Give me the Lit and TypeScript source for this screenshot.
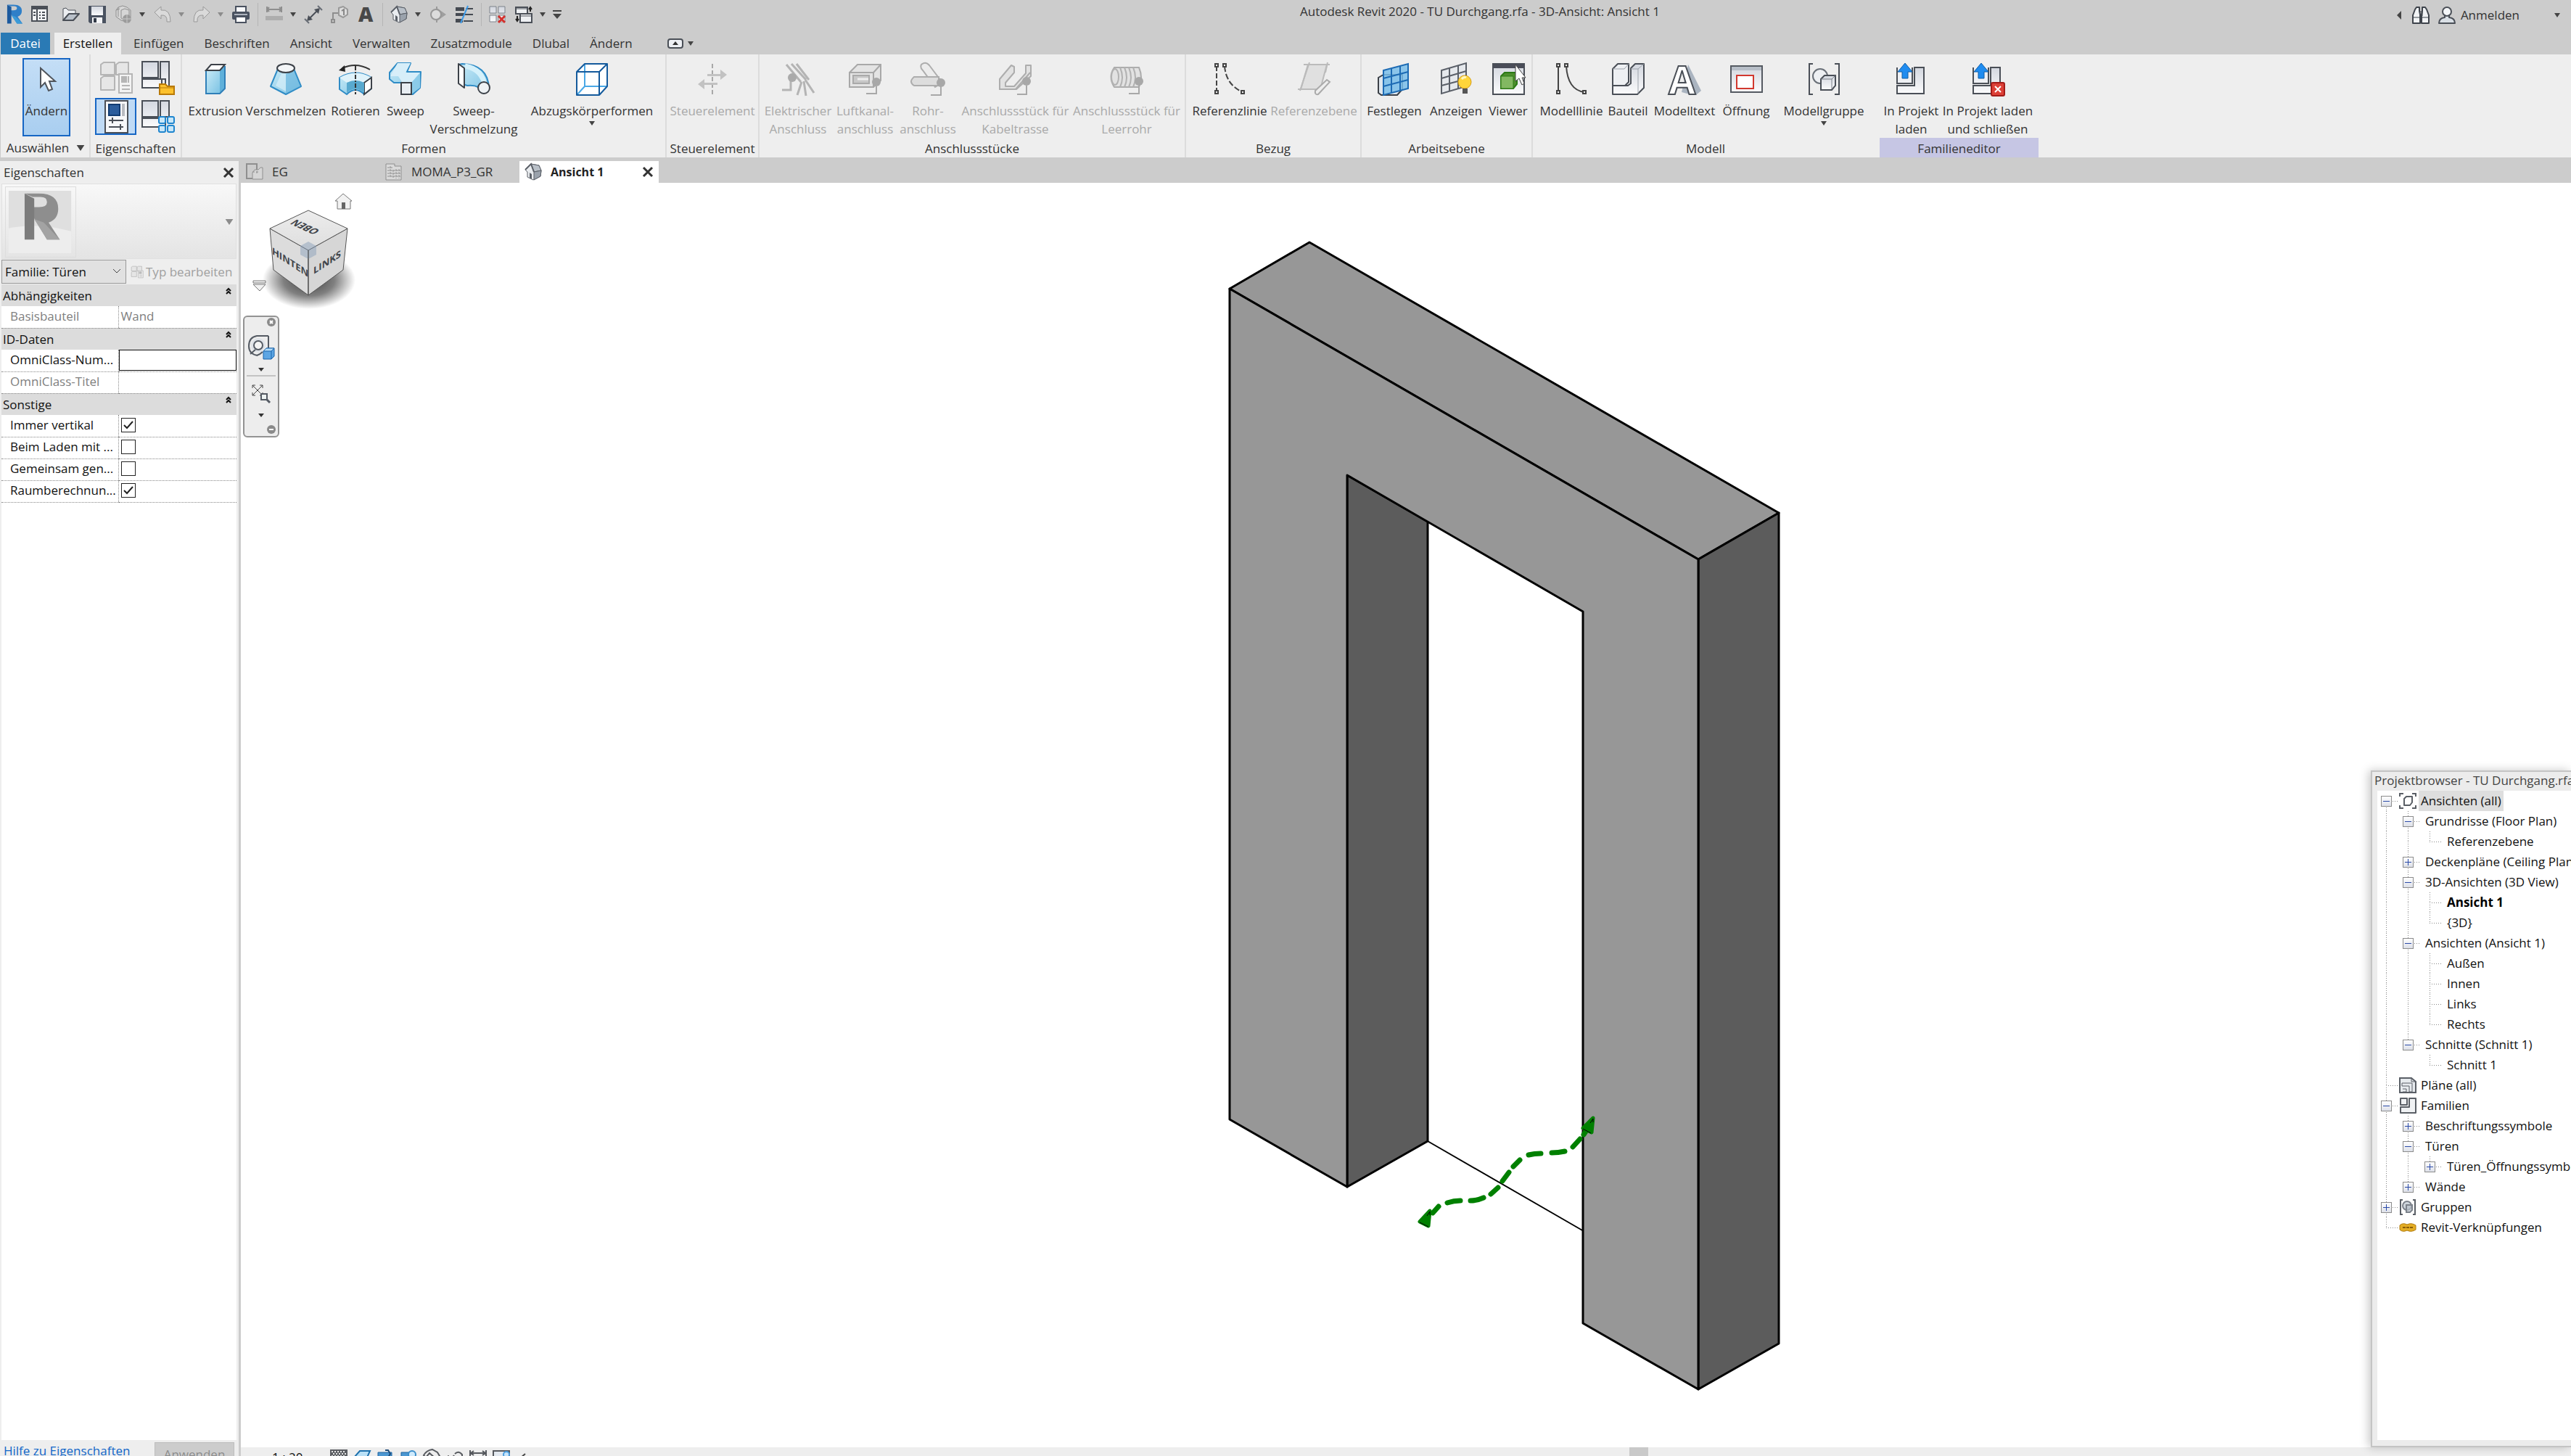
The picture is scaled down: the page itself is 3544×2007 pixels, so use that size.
import { LitElement, html, svg, css, nothing, type TemplateResult } from "lit";
import { customElement, state } from "lit/decorators.js";
import { classMap } from "lit/directives/class-map.js";
import { styleMap } from "lit/directives/style-map.js";

type Art = TemplateResult<2>;

/** 48-unit drawings used by the large ribbon commands. */
const ribbonArt: Record<string, Art> = {
  extrusion: svg`<path d="M11 12h19v32H11z" fill="url(#cyan)"/><path d="M30 12l7-7v32l-7 7z" fill="#5fb0da"/><path d="M11 12l7-8h19l-7 8z" fill="#fff" stroke="#3c4148" stroke-width="2"/><path d="M11 13v31h19l7-7V6" fill="none" stroke="#2f7fb8" stroke-width="2"/>`,
  blend: svg`<path d="M13 10L3 34l21 11 21-11L35 10z" fill="url(#cyan)" stroke="#2f8cc6" stroke-width="2" stroke-linejoin="round"/><path d="M24 17v27l20-10-9-22z" fill="#6db7de" opacity=".65"/><path d="M18 16L10 33l14 8V17z" fill="#d9f0fa" opacity=".7"/><ellipse cx="24" cy="9" rx="12" ry="6" fill="#f4f6f8" stroke="#3c4148" stroke-width="2"/>`,
  revolve: svg`<path d="M2 22q22-13 44 0v15l-10 8q-12-12-24 0L2 38z" fill="url(#cyan)" stroke="#2f8cc6" stroke-width="2"/><path d="M2 22q22-13 44 0l-10 7q-12-6-24 0z" fill="#dff2fa"/><path d="M36 29l10-7v15l-10 8z" fill="#fff" stroke="#3c4148" stroke-width="2"/><path d="M12 29q12-6 24 0v14q-12-11-24 0z" fill="#58a9cf"/><path d="M24 6v39" stroke="#333" stroke-width="2" stroke-dasharray="6 2 2 2"/><path d="M6 9q19-9 38 2" fill="none" stroke="#333" stroke-width="2"/><path d="M1 12l8-7 1 9z" fill="#222"/>`,
  sweep: svg`<path d="M13 2h18l-5 12h19l-1 22-10 9H19V29H8L2 24v-9z" fill="url(#cyan)" stroke="#2f8cc6" stroke-width="2" stroke-linejoin="round"/><path d="M13 2h18l-7 13h20L33 28H19L14 20H3z" fill="#d7eef9"/><path d="M33 28l11-12v20l-11 8z" fill="#8bcbe8"/><path d="M18 29h14v16H18z" fill="#e8edf2" stroke="#3c4148" stroke-width="2"/>`,
  sweptBlend: svg`<path d="M8 3q36 1 37 34l-8 6q-5-12-22-10L3 29V4z" fill="url(#cyan)" stroke="#2f8cc6" stroke-width="2"/><path d="M12 6q24 4 28 29" fill="none" stroke="#d5f1fb" stroke-width="7"/><path d="M3 3l8 6v27l-8-6z" fill="#fff" stroke="#3c4148" stroke-width="2" stroke-linejoin="round"/><circle cx="38" cy="36" r="8" fill="#eef2f5" stroke="#3c4148" stroke-width="2"/>`,
  voidForm: svg`<path d="M3 14L14 3h31v32L34 46H3z" fill="#fff"/><path d="M14 3v31L3 46M14 34h31" fill="none" stroke="#4aa8e6" stroke-width="2"/><path d="M3 14h31v32H3zL14 3h31L34 14M45 3v31L34 46" fill="none" stroke="#145a9c" stroke-width="2" stroke-linejoin="round"/>`,
  control: svg`<path d="M24 3v43" stroke="#a8a8a8" stroke-width="2" stroke-dasharray="6 3"/><path d="M17 17h18v-6l9 7-9 7v-5H17zM31 29H13v-5l-9 7 9 7v-6h18z" fill="#c2c2c2"/>`,
  elec: svg`<g fill="none" stroke="#b4b4b4" stroke-width="3"><path d="M8 4l20 24M15 3l20 22M22 3l17 22M29 28l-6 18M32 27l3 20M34 25l12 18M14 27v12H2"/></g><circle cx="16" cy="22" r="6" fill="#aaa"/>`,
  duct: svg`<path d="M2 15L13 4h32v22L35 35H2z" fill="#e4e4e4" stroke="#a8a8a8" stroke-width="2"/><path d="M2 15h33v20H2zM35 15L45 4" fill="none" stroke="#a8a8a8" stroke-width="2"/><path d="M7 19h22v11H7z" fill="#c8c8c8" stroke="#aaa" stroke-width="2"/><path d="M13 24h15" stroke="#eee" stroke-width="3"/><circle cx="39" cy="28" r="6" fill="#a8a8a8"/><path d="M39 34v10H25" fill="none" stroke="#a8a8a8" stroke-width="2"/>`,
  pipe: svg`<path d="M15 4q6-5 11 1l18 24-10 6L17 12q-4-4-2-8z" fill="#ececec" stroke="#adadad" stroke-width="2"/><path d="M5 21h34v12H5q-8-5 0-12z" fill="#ddd" stroke="#adadad" stroke-width="2"/><circle cx="42" cy="29" r="6" fill="#a8a8a8"/><path d="M42 34v12H28" fill="none" stroke="#a8a8a8" stroke-width="2"/>`,
  tray: svg`<path d="M2 24L18 5l4 2v8L10 29v5h12l16-18V5h7v15L25 38H2z" fill="#e2e2e2" stroke="#adadad" stroke-width="2" stroke-linejoin="round"/><path d="M2 24v14h22l20-23" fill="none" stroke="#adadad" stroke-width="2"/><circle cx="39" cy="27" r="6" fill="#a8a8a8"/><path d="M39 33v12H26" fill="none" stroke="#a8a8a8" stroke-width="2"/>`,
  conduit: svg`<path d="M7 8h34q6 14 0 27H7Q-2 21 7 8z" fill="#e2e2e2" stroke="#adadad" stroke-width="2"/><g fill="none" stroke="#b2b2b2" stroke-width="2"><path d="M15 8q6 14 0 27M21 8q6 14 0 27M27 8q6 14 0 27M33 8q6 14 0 27"/><ellipse cx="8" cy="21" rx="5" ry="11"/></g><circle cx="41" cy="27" r="6" fill="#a8a8a8"/><path d="M41 33v11H27" fill="none" stroke="#a8a8a8" stroke-width="2"/>`,
  refLine: svg`<path d="M6 6v34" stroke="#444" stroke-width="2" stroke-dasharray="7 3"/><path d="M17 6q2 26 25 36" fill="none" stroke="#444" stroke-width="2" stroke-dasharray="8 3"/><g fill="#eee" stroke="#444" stroke-width="2"><path d="M4 3h4v4H4zM15 3h4v4h-4zM4 40h4v4H4zM40 40h4v4h-4z"/></g>`,
  refPlane: svg`<path d="M16 4h26l-9 34H6z" fill="#e0e0e0" stroke="#bbb" stroke-width="2"/><path d="M10 4h36M18 1L5 40M43 1l-3 14M2 38h26" stroke="#bbb" stroke-width="2"/><path d="M26 40l16-15 4 3-16 17q-5 1-4-5z" fill="#eee" stroke="#aaa" stroke-width="2"/>`,
  setPlane: svg`<path d="M2 22l7-4h26v20l-7 8H6l-4-3z" fill="#dfe7ee" stroke="#3c4148" stroke-width="2"/><path d="M9 12l34-9v34L9 46z" fill="#79bde9" fill-opacity=".85" stroke="#1d6bb4" stroke-width="2"/><path d="M20 9v34M32 6v34M9 23l34-9M9 34l34-9" stroke="#1d6bb4" stroke-width="2"/>`,
  showPlane: svg`<path d="M4 12l34-10v32L4 44z" fill="#e5e8ec" stroke="#5a5f68" stroke-width="2"/><path d="M15 9v32M27 6v32M4 23l34-10M4 33l34-9" stroke="#5a5f68" stroke-width="2"/><circle cx="36" cy="28" r="9" fill="#ffd53a" stroke="#d59b12"/><path d="M32 24q3-4 6-2" stroke="#fff6c0" stroke-width="3" fill="none"/><path d="M33 37h7v7h-7z" fill="#555"/>`,
  viewer: svg`<path d="M3 3h43v42H3z" fill="url(#steel)" stroke="#4a4f57" stroke-width="2"/><path d="M3 3h43v6H3z" fill="#4a4d58"/><path d="M14 20l5-5h17v16l-5 6H14z" fill="#4d8f2d" stroke="#2c7a17" stroke-width="2"/><path d="M14 20h17v17H14z" fill="#82b862" stroke="#2c7a17" stroke-width="1"/><path d="M34 4v23l5-4 4 9 3-2-3-8h5z" fill="#fff" stroke="#444"/>`,
  modelLine: svg`<path d="M6 6v34M17 6q2 33 25 36" fill="none" stroke="#444" stroke-width="2"/><g fill="#eee" stroke="#444" stroke-width="2"><path d="M4 3h4v4H4zM15 3h4v4h-4zM4 40h4v4H4zM40 40h4v4h-4z"/></g>`,
  component: svg`<path d="M3 10l7-7h15v25l-5 5H3z" fill="#eef0f3" stroke="#4a4f57" stroke-width="2" stroke-linejoin="round"/><path d="M28 9l6-6h12v33l-9 9H3V33h21l4-3z" fill="url(#steel)" stroke="#4a4f57" stroke-width="2" stroke-linejoin="round"/><path d="M3 10h16l6-7M28 10h10l8-7M38 10v34" fill="none" stroke="#9da3ab"/>`,
  modelText: svg`<path d="M20 42L29 4l18 36-6 5H31z" fill="#aab4c0"/><text x="2" y="45" class="glyph54" fill="#fff" stroke="#4a4f57" stroke-width="2">A</text>`,
  opening: svg`<path d="M3 6h43v36H3z" fill="url(#steel)" stroke="#555a62" stroke-width="2"/><path d="M4 7h41v5H4z" fill="#b8bfc8"/><path d="M11 19h23v18H11z" fill="#fff" stroke="#d2382f" stroke-width="2"/>`,
  modelGroup: svg`<path d="M9 3H4v42h5M39 3h6v42h-6" fill="none" stroke="#4a4f57" stroke-width="2"/><circle cx="19" cy="20" r="10" fill="#eef0f3" stroke="#6a7078" stroke-width="2"/><path d="M20 24l5-5h15v14l-5 6H20z" fill="url(#steel)" stroke="#4a4f57" stroke-width="2"/><path d="M20 24h15v14M35 24l5-5" fill="none" stroke="#7a8088"/>`,
  load: svg`<path d="M4 8h22v22H4z" fill="#eef0f4"/><path d="M4 8v22h21V8" fill="none" stroke="#4a4f57" stroke-width="2"/><path d="M28 8h13v36H4V33h24z" fill="url(#steel)" stroke="#4a4f57" stroke-width="2"/><path d="M15 2l10 12h-6v9h-8v-9H5z" fill="#1f8cf0" stroke="#0f5ea8"/>`,
  loadClose: svg`<path d="M4 8h22v22H4z" fill="#eef0f4"/><path d="M4 8v22h21V8" fill="none" stroke="#4a4f57" stroke-width="2"/><path d="M28 8h13v36H4V33h24z" fill="url(#steel)" stroke="#4a4f57" stroke-width="2"/><path d="M15 2l10 12h-6v9h-8v-9H5z" fill="#1f8cf0" stroke="#0f5ea8"/><rect x="29" y="29" width="18" height="18" rx="2" fill="#dd4037" stroke="#a31b18" stroke-width="2"/><path d="M34 34l8 8m0-8l-8 8" stroke="#fff" stroke-width="2"/>`,
  cursor: svg`<path d="M16 9v26l6-6 5 11 5-2-4-11h8z" fill="#fff" stroke="#50555c" stroke-width="2"/>`,
  typeProps: svg`<g fill="#e6e6e6" stroke="#b5b5b5" stroke-width="2" stroke-linejoin="round"><path d="M3 6l4-3h15v17H3zM24 6l4-3h13v17H24zM3 25l4-3h15v19H3z"/></g><path d="M28 19h18v26H28z" fill="#f3f3f3" stroke="#b5b5b5" stroke-width="2"/><path d="M31 22h8v9h-8z" fill="#b5b5b5"/><path d="M41 22v9M32 35h11M32 40h11" stroke="#b5b5b5" stroke-width="2"/>`,
  famTypes: svg`<path d="M2 2h22v22H2zM2 26h32v12H2zM27 2h12v35H29V26h-2z" fill="url(#steel)" stroke="#4a4f57" stroke-width="2"/><path d="M26 33h8l3 3h9v11H26z" fill="#fcc12d" stroke="#b97a08" stroke-width="2"/><path d="M26 38h20" stroke="#b97a08"/>`,
  props: svg`<path d="M9 2h31v44H9z" fill="#f6f7f9" stroke="#4a4f57" stroke-width="2"/><path d="M14 7h15v15H14z" fill="#2c5d9c" stroke="#123c72" stroke-width="2"/><path d="M32 6h4v17h-4z" fill="#b9bcc2"/><path d="M14 29h20M14 38h20M19 25v8M30 34v8" stroke="#4a4f57" stroke-width="2"/>`,
  famCategory: svg`<path d="M2 2h22v22H2zM2 26h32v12H2zM27 2h12v22H27z" fill="url(#steel)" stroke="#4a4f57" stroke-width="2"/><g fill="#c9e7f8" stroke="#1f86cf" stroke-width="2"><rect x="25" y="24" width="9" height="9" rx="2"/><rect x="37" y="24" width="9" height="9" rx="2"/><rect x="25" y="36" width="9" height="9" rx="2"/><rect x="37" y="36" width="9" height="9" rx="2"/></g>`,
};

/** 24-unit drawings for the small toolbars. */
const smallArt: Record<string, Art> = {
  menu: svg`<path d="M1 1h21v20H1z" fill="#f2f3f5" stroke="#4a4f57" stroke-width="2"/><path d="M1 1h21v4H1z" fill="#4a4f57"/><path d="M8 5v16" stroke="#4a4f57" stroke-width="2"/><path d="M3 9h3M3 13h3M11 9h2M15 9h4M11 13h2M15 13h4M11 17h2M15 17h4" stroke="#4a4f57" stroke-width="2"/>`,
  open: svg`<path d="M1 20V4l4-1 3 3h10v5" fill="#eceef1" stroke="#4a4f57" stroke-width="1"/><path d="M1 20l8-9h14l-8 9z" fill="#b9c0c9" stroke="#4a4f57" stroke-width="2" stroke-linejoin="round"/>`,
  save: svg`<path d="M0 0h24v24H2l-2-2z" fill="#4a5260"/><path d="M4 1h16v12H4z" fill="url(#steel)"/><path d="M5 16h14v8H5z" fill="#f4f5f7"/><path d="M7 17h4v6H7z" fill="#333b48"/>`,
  sync: svg`<g fill="#d6d6d6" stroke="#8f8f8f" stroke-width="1"><path d="M5 2l6-2 6 2 5 4v9l-6 7-7-2-7-5V6z"/><path d="M9 6l5-2 6 2v10l-6 4-5-3zM2 6l5-2M5 2v13" fill="none"/></g><circle cx="17" cy="18" r="6" fill="#9b9b9b"/><path d="M11 18h12M17 12v12" stroke="#c9c9c9"/>`,
  undo: svg`<path d="M1 9l9-8v5q13-2 13 16h-5q1-10-8-9v5z" fill="#dadada" stroke="#999" stroke-linejoin="round"/>`,
  redo: svg`<path d="M23 9l-9-8v5Q1 4 1 22h5q-1-10 8-9v5z" fill="#dadada" stroke="#999" stroke-linejoin="round"/>`,
  print: svg`<path d="M5 1h14v8H5z" fill="#f7f8fa" stroke="#4a5260" stroke-width="2"/><rect x="0" y="8" width="24" height="11" rx="2" fill="#4a5260"/><path d="M5 15h14v8H5z" fill="#fff" stroke="#4a5260" stroke-width="2"/><path d="M3 12h18" stroke="#aeb4bd" stroke-width="2"/>`,
  measure: svg`<path d="M2 5h20M2 1v8M22 1v8M5 2L2 5l3 3M19 2l3 3-3 3" fill="none" stroke="#8e8e8e" stroke-width="2"/><path d="M0 14h24v6H0z" fill="#adadad"/>`,
  dimension: svg`<path d="M6 18L18 6" stroke="#4a4f57" stroke-width="2"/><path d="M3 21l2-8 6 6zM21 3l-8 2 6 6z" fill="#4a4f57"/><path d="M0 18l6 6M18 0l6 6" stroke="#6a6f77" stroke-width="2"/>`,
  tag: svg`<path d="M1 19h4v4H1zM3 19v-9h7" fill="none" stroke="#8e8e8e" stroke-width="2"/><path d="M11 3l6-2 6 4v7l-6 4-6-3z" fill="#ddd" stroke="#999" stroke-width="2"/><path d="M15 7l3-2v8" fill="none" stroke="#888" stroke-width="2"/>`,
  text: svg`<text x="2" y="22" class="glyph28" fill="#484848">A</text>`,
  house: svg`<path d="M1 9L9 1l11 2 3 7-1 8-10 5-8-4V12z" fill="#e9ecef" stroke="#5a5f67" stroke-width="1" stroke-linejoin="round"/><path d="M13 12L9 1l11 2 3 7z" fill="#b9c0c8" stroke="#5a5f67"/><path d="M7 13l3 2v7l-3-2z" fill="#5a5f67"/><path d="M13 12v11l9-5 1-8z" fill="#9aa2ac" stroke="#5a5f67"/><path d="M1 9l8-8 4 11" fill="none" stroke="#5a5f67" stroke-width="2"/>`,
  section: svg`<path d="M10 1v4M10 18v5" stroke="#9a9a9a" stroke-width="2"/><path d="M10 3l13 9-13 9z" fill="#9f9f9f"/><circle cx="9" cy="12" r="7" fill="#dcdcdc" stroke="#989898" stroke-width="2"/>`,
  thinLines: svg`<path d="M0 2h12v5H0zM0 10h12v4H0zM0 18h10v5H0z" fill="#454a52"/><path d="M14 4h10M12 12h12M11 21h13" stroke="#454a52" stroke-width="2"/><path d="M17 0L7 24" stroke="#3d9be9" stroke-width="2"/>`,
  closeHidden: svg`<g fill="url(#steel)" stroke="#7c828b"><path d="M1 1h9v9H1zM13 1h9v9h-9zM1 13h9v9H1zM13 13h9v9h-9z"/></g><path d="M13 14l9 9m0-9l-9 9" stroke="#d4302b" stroke-width="3"/>`,
  switchWin: svg`<path d="M1 2h16v9H1zM7 11h16v12H7z" fill="#eef0f3" stroke="#4a4f57" stroke-width="2"/><path d="M1 4h16M7 14h16" stroke="#4a4f57" stroke-width="1"/><path d="M21 2v6M19 5l2-3 2 3M3 14v6M1 18l2 3 2-3" fill="none" stroke="#222" stroke-width="2"/>`,
  binoculars: svg`<path d="M6 1h4v5l1 5v12H1V12l3-8zM18 1h-4v5l-1 5v12h10V12l-3-8z" fill="#f1f3f5" stroke="#3f444c" stroke-width="2" stroke-linejoin="round"/><path d="M1 15h10M13 15h10M10 7h4v6h-4" stroke="#3f444c" stroke-width="1" fill="none"/>`,
  person: svg`<path d="M1 23q0-7 8-8v-3h6v3q8 1 8 8z" fill="#d9dfe5" stroke="#4a4f57" stroke-width="2" stroke-linejoin="round"/><circle cx="12" cy="7" r="6" fill="#f4f6f8" stroke="#4a4f57" stroke-width="2"/>`,
  planView: svg`<path d="M1 1h14v20H1z" fill="none" stroke="#8f8f8f" stroke-width="2"/><path d="M12 9h5l3-3h3v16H9V13z" fill="#d6d6d6" stroke="#8f8f8f" stroke-width="1"/><path d="M9 12h10M15 6v10" stroke="#8f8f8f" stroke-dasharray="3 2"/>`,
  schedule: svg`<path d="M1 1h12v3h9v19H1z" fill="#dadada" stroke="#8f8f8f" stroke-width="1"/><path d="M3 6h8M3 10h18M3 14h18M3 18h18M7 4v16M11 9v12M15 8v13M19 8v13" stroke="#8f8f8f" stroke-dasharray="3 1"/>`,
  viewsRoot: svg`<path d="M1 6V2h5M18 2h5v4M23 18v4h-5M6 22H1v-4" fill="none" stroke="#5a5f66" stroke-width="2"/><path d="M7 9l3-3h8v8l-3 4H7z" fill="#fff" stroke="#5a5f66" stroke-width="2" stroke-linejoin="round"/>`,
  sheets: svg`<path d="M1 2h16l6 5v15H1z" fill="#e6eaee" stroke="#5a5f66" stroke-width="2"/><path d="M4 9h14v12h-4v-8H4zM5 17h5v4H5M17 2v5h6" fill="none" stroke="#5a5f66" stroke-width="1"/>`,
  families: svg`<path d="M2 2h9v9H2zM14 2h9v20H2v-8h12z" fill="#f0f2f4" stroke="#5a5f66" stroke-width="2" stroke-linejoin="round"/>`,
  groups: svg`<path d="M5 2H2v20h3M19 2h3v20h-3" fill="none" stroke="#5a5f66" stroke-width="2"/><circle cx="11" cy="10" r="6" fill="#cfd6dd" stroke="#7c828b" stroke-width="2"/><path d="M10 9h8v7l-3 3h-5z" fill="#b8c1ca" fill-opacity=".7" stroke="#7c828b" stroke-width="2"/>`,
  links: svg`<path d="M1 9q4-4 10-1 6-3 12 1v6q-6 4-12 1-6 3-10-1z" fill="#e3ad25" stroke="#b27c10" stroke-width="1"/><path d="M5 12h4M15 12h4M10 12h4" stroke="#8a5e0a" stroke-width="2"/>`,
  detail: svg`<path d="M0 0h24v12H0z" fill="#5c5f63"/><path d="M2 3h20M4 6h18M2 9h20" stroke="#e4e4e4" stroke-width="2" stroke-dasharray="2 2"/>`,
  visual: svg`<path d="M1 11l8-9h14l-4 9z" fill="#b9e0f6" stroke="#1c70ad" stroke-width="2"/>`,
  sun: svg`<path d="M2 4h19v8H2z" fill="#4c97d1" stroke="#1c62a0"/><path d="M12 1h4l3 5-3 5" fill="none" stroke="#1c4b78" stroke-width="2"/>`,
  shadow: svg`<path d="M2 4h15v8H2z" fill="#4c97d1" stroke="#1c62a0"/><circle cx="17" cy="7" r="5" fill="#cfeafc" stroke="#3a8ecb" stroke-width="2"/>`,
  crop: svg`<path d="M1 8q4-7 12-8l7 4 3 5-6 3-8-7-5 6z" fill="#eee" stroke="#56595e" stroke-width="2"/>`,
  lock: svg`<circle cx="3" cy="9" r="1" fill="#555"/><path d="M8 12l3-4M12 6q5-5 10 1v5" fill="none" stroke="#56595e" stroke-width="2"/>`,
  reveal: svg`<path d="M1 1v11M23 1v11M2 5h20M6 2L2 5l4 3M18 2l4 3-4 3" fill="none" stroke="#56595e" stroke-width="2"/>`,
  region: svg`<path d="M1 12V2h22v10" fill="#e3e9f0" stroke="#56595e" stroke-width="2"/><circle cx="19" cy="7" r="4" fill="#c8e5fa" stroke="#4d9fe0" stroke-width="2"/>`,
  chevronLeft: svg`<path d="M13 6L6 12" stroke="#444" stroke-width="2"/>`,
};

const large = (name: string) => html`<svg class="i48" viewBox="0 0 48 48" aria-hidden="true">${ribbonArt[name]}</svg>`;
const small = (name: string) => html`<svg class="i24" viewBox="0 0 24 24" aria-hidden="true">${smallArt[name]}</svg>`;
const caret = (tone = "dark") =>
  html`<svg class="caret ${tone}" viewBox="0 0 8 6" aria-hidden="true"><path d="M0 0h8L4 6z" /></svg>`;

/** Folded-ribbon letter mark of the application. */
const mark = (a: string, b: string, c: string) => svg`
  <path d="M2 0h9q12 0 12 9 0 6-6 8l7 10h-8l-9-14V8h4q5 0 5-3t-4-3H7z" fill="${b}"/>
  <path d="M2 0l6 3v24H2z" fill="${a}"/><path d="M8 15l6 2 10 10h-8z" fill="${c}"/>`;

interface Tool { icon: string; label: string[]; width: number; off?: boolean; menu?: boolean }
interface Group { title: string; tools: Tool[]; context?: boolean }

const t = (icon: string, label: string, width: number, extra: Partial<Tool> = {}): Tool => ({ icon, label: label.split("|"), width, ...extra });

const groups: Group[] = [
  { title: "Formen", tools: [
    t("extrusion", "Extrusion", 84), t("blend", "Verschmelzen", 110), t("revolve", "Rotieren", 82),
    t("sweep", "Sweep", 56), t("sweptBlend", "Sweep-|Verschmelzung", 132), t("voidForm", "Abzugskörperformen", 194, { menu: true }),
  ] },
  { title: "Steuerelement", tools: [t("control", "Steuerelement", 118, { off: true })] },
  { title: "Anschlussstücke", tools: [
    t("elec", "Elektrischer|Anschluss", 98, { off: true }), t("duct", "Luftkanal-|anschluss", 87, { off: true }),
    t("pipe", "Rohr-|anschluss", 86, { off: true }), t("tray", "Anschlussstück für|Kabeltrasse", 155, { off: true }),
    t("conduit", "Anschlussstück für|Leerrohr", 152, { off: true }),
  ] },
  { title: "Bezug", tools: [t("refLine", "Referenzlinie", 112), t("refPlane", "Referenzebene", 120, { off: true })] },
  { title: "Arbeitsebene", tools: [t("setPlane", "Festlegen", 82), t("showPlane", "Anzeigen", 88), t("viewer", "Viewer", 56)] },
  { title: "Modell", tools: [
    t("modelLine", "Modelllinie", 98), t("component", "Bauteil", 58), t("modelText", "Modelltext", 98),
    t("opening", "Öffnung", 72), t("modelGroup", "Modellgruppe", 142, { menu: true }),
  ] },
  { title: "Familieneditor", context: true, tools: [t("load", "In Projekt|laden", 79), t("loadClose", "In Projekt laden|und schließen", 132)] },
];

/** Quick access entries: "|" is a divider, a trailing "v" or "w" adds a drop-down caret. */
const quick: [string, string][] = [
  ["open", "Öffnen"], ["save", "Speichern"], ["sync v", "Synchronisieren"], ["undo w", "Rückgängig"], ["redo w", "Wiederherstellen"],
  ["print", "Drucken"], ["|", ""], ["measure v", "Messen"], ["dimension", "Bemaßung"], ["tag", "Beschriften"], ["text", "Text"],
  ["|", ""], ["house v", "3D-Ansicht"], ["section", "Schnitt"], ["thinLines", "Dünne Linien"], ["|", ""],
  ["closeHidden", "Verdeckte schließen"], ["switchWin v", "Fenster wechseln"],
];

/** Guides per level: v through, t branch, l last branch, d downward start, "." blank; +/- adds the expander. */
interface Node { guides: string[]; text: string; icon?: string; bold?: boolean; picked?: boolean }
const tree: Node[] = [
  { guides: ["d-"], text: "Ansichten (all)", icon: "viewsRoot", picked: true },
  { guides: ["v", "t-"], text: "Grundrisse (Floor Plan)" },
  { guides: ["v", "v", "l"], text: "Referenzebene" },
  { guides: ["v", "t+"], text: "Deckenpläne (Ceiling Plan)" },
  { guides: ["v", "t-"], text: "3D-Ansichten (3D View)" },
  { guides: ["v", "v", "t"], text: "Ansicht 1", bold: true },
  { guides: ["v", "v", "l"], text: "{3D}" },
  { guides: ["v", "t-"], text: "Ansichten (Ansicht 1)" },
  { guides: ["v", "v", "t"], text: "Außen" },
  { guides: ["v", "v", "t"], text: "Innen" },
  { guides: ["v", "v", "t"], text: "Links" },
  { guides: ["v", "v", "l"], text: "Rechts" },
  { guides: ["v", "l-"], text: "Schnitte (Schnitt 1)" },
  { guides: ["v", ".", "l"], text: "Schnitt 1" },
  { guides: ["t"], text: "Pläne (all)", icon: "sheets" },
  { guides: ["t-"], text: "Familien", icon: "families" },
  { guides: ["v", "t+"], text: "Beschriftungssymbole" },
  { guides: ["v", "t-"], text: "Türen" },
  { guides: ["v", "v", "l+"], text: "Türen_Öffnungssymbol" },
  { guides: ["v", "l+"], text: "Wände" },
  { guides: ["t+"], text: "Gruppen", icon: "groups" },
  { guides: ["l"], text: "Revit-Verknüpfungen", icon: "links" },
];

const guide = (g: string) => {
  const [kind, box] = [g[0], g[1]];
  const top = kind === "v" || kind === "t" || kind === "l";
  const down = kind === "v" || kind === "t" || kind === "d";
  const side = kind !== "v" && kind !== ".";
  return html`<svg class="guide" viewBox="0 0 24 28" aria-hidden="true">
    ${top ? svg`<path class="dots" d="M12.5 0v14"/>` : nothing}
    ${down ? svg`<path class="dots" d="M12.5 14v14"/>` : nothing}
    ${side ? svg`<path class="dots" d="M12 14.5h17"/>` : nothing}
    ${box ? svg`<rect x="5.5" y="7.5" width="14" height="14" fill="url(#boxFill)" stroke="#8c8c8c"/><path d="M8 14.5h9${box === "+" ? "M12.5 10v9" : ""}" stroke="#2b4ba8" fill="none"/>` : nothing}
  </svg>`;
};

@customElement("app-root")
export class AppRoot extends LitElement {
  static styles = css`
    :host { display: grid; grid-template-rows: 45px 30px 142px 1fr; height: 100vh; overflow: hidden; background: #ccc;
      font: 17px/24px "Open Sans", "Noto Sans", sans-serif; color: #333; }
    * { box-sizing: border-box; }
    button, input, select { font: inherit; color: inherit; margin: 0; }
    button { border: 0; padding: 0; background: none; white-space: nowrap; }
    a { color: #1166c8; white-space: nowrap; }
    svg { display: block; flex: none; overflow: visible; }
    .defs { position: absolute; width: 0; height: 0; }
    .i48 { width: 48px; height: 48px; }
    .i24 { width: 24px; height: 24px; }
    .caret { width: 8px; height: 6px; fill: #444; }
    .caret.soft { fill: #8c8c8c; }
    .caret.wide { width: 12px; height: 8px; }
    .glyph54 { font: 700 54px "Open Sans", sans-serif; }
    .glyph28 { font: 800 28px "Open Sans", sans-serif; }

    .titlebar { display: flex; }
    .quick { display: flex; height: 40px; align-items: center; padding-left: 2px; }
    .logo { width: 35px; padding-left: 6px; }
    .logo svg { width: 24px; height: 28px; }
    .cell { width: 36px; height: 36px; display: grid; place-items: center; }
    .cell.menu { margin-right: 7px; }
    .drop { width: 18px; height: 36px; padding-left: 4px; display: flex; align-items: center; }
    .rule { width: 10px; height: 32px; display: flex; justify-content: center; }
    .rule::before { content: ""; width: 1px; background: #b5b5b5; }
    .title { flex: 1; text-align: center; padding-top: 4px; }
    .account { display: flex; align-items: center; height: 42px; gap: 12px; padding-right: 15px; }
    .account .login { display: flex; gap: 7px; align-items: center; padding-right: 36px; }
    .account .back { margin-right: 3px; }

    .tabs { display: flex; align-items: stretch; padding-left: 1px; }
    .tab { padding: 0 14px; }
    .tab.file { width: 68px; padding: 0; background: #2a7ab5; color: #fff; margin-right: 6px; }
    .tab.active { width: 92px; padding: 0; background: #eee; color: #111; margin-right: 3px; }
    .fold { display: flex; gap: 6px; align-items: center; padding-left: 34px; }
    .fold svg:first-child { width: 22px; height: 14px; }

    .ribbon { display: flex; background: #eee; border-left: 1px solid #ccc; }
    .group { display: flex; flex-direction: column; border-right: 2px solid #dcdcdc; }
    .group.plain { border-right-color: transparent; }
    .tools { flex: 1; display: flex; padding: 0 4px; }
    .group h2 { margin: 0; height: 27px; font: inherit; text-align: center; line-height: 29px; white-space: nowrap; }
    .group.context { border: 0; }
    .group.context h2 { background: #c6c6e4; }
    .tool { display: flex; flex-direction: column; align-items: center; gap: 7px; padding-top: 10px; line-height: 25px; }
    .tool:disabled { color: #a9a9a9; }
    .label { display: flex; flex-direction: column; align-items: center; }
    .label .caret { margin-top: 2px; }
    .select { width: 124px; }
    .select .tools { justify-content: center; padding: 5px 0 0 4px; }
    .modify { width: 66px; height: 108px; border: 2px solid #1766c4; background: linear-gradient(#c4def6, #a9cef0); padding-top: 3px; }
    .select h2 { display: flex; align-items: center; justify-content: center; gap: 10px; padding-left: 2px; }
    .props { width: 126px; }
    .quad { flex: 1; display: grid; grid-template-columns: 57px 57px; grid-template-rows: 54px 51px; gap: 1px; padding: 5px 0 0 6px; }
    .quad button { display: grid; place-items: center; }
    .quad .on { border: 2px solid #1766c4; background: #bfdaf5; }

    .main { display: grid; grid-template-columns: 329px 1fr; column-gap: 3px; padding-top: 5px; min-height: 0; }
    .palette { display: flex; flex-direction: column; background: #eee; padding: 0 3px 0 2px; min-height: 0; }
    .phead { height: 31px; display: flex; align-items: center; justify-content: space-between; padding: 0 4px 0 3px; }
    .x { width: 14px; height: 14px; stroke: #333; stroke-width: 3; }
    .type { height: 104px; display: flex; align-items: center; justify-content: space-between; border: 1px solid #e0e0e0; padding: 2px 3px 0 4px;
      background: linear-gradient(#f8f8f8, #e4e4e4); }
    .thumb { width: 98px; height: 98px; border: 1px solid #ddd; }
    .chooser { height: 35px; display: flex; align-items: center; gap: 6px; color: #a0a0a0; }
    .combo { position: relative; width: 172px; height: 33px; }
    .combo select { width: 100%; height: 100%; appearance: none; border: 1px solid #999; border-radius: 0; background: #e1e1e1; color: #111; padding: 0 4px; }
    .combo svg { position: absolute; right: 7px; top: 12px; width: 12px; height: 8px; pointer-events: none; }
    .edit { display: flex; align-items: center; gap: 3px; }
    .edit svg { width: 18px; height: 18px; }
    .list { flex: 1; background: #fff; min-height: 0; }
    table { width: 100%; border-collapse: collapse; table-layout: fixed; color: #111; }
    col.name { width: 161px; }
    tr { height: 30px; }
    th, td { padding: 0; font-weight: 400; text-align: left; height: 30px; white-space: nowrap; }
    .section th { background: #dcdcdc; padding: 1px 0 0 2px; }
    .section button { float: right; width: 10px; height: 12px; margin: 0 5px; }
    .section .chev { width: 8px; height: 9px; fill: none; stroke: #111; stroke-width: 2; }
    .item th, .item td { border-bottom: 1px dotted #888; padding-bottom: 2px; }
    .item th { padding-left: 12px; }
    .item td { border-left: 1px dotted #888; padding-left: 3px; }
    .item.dim { color: #808080; }
    .item td.field { padding: 0; }
    .field input { display: block; width: 100%; height: 29px; border: 1px solid #111; background: #fff; padding: 0 4px; }
    .check { appearance: none; display: block; width: 20px; height: 20px; border: 1px solid #222; background: #fff; }
    .tick { display: grid; width: 20px; height: 20px; }
    .tick > * { grid-area: 1 / 1; }
    .tick svg { width: 20px; height: 20px; pointer-events: none; visibility: hidden; }
    .check:checked + svg { visibility: visible; }
    .pfoot { height: 22px; display: flex; justify-content: space-between; padding: 3px 3px 0; overflow: hidden; }
    .pfoot button { width: 110px; height: 34px; background: #ccc; border: 1px solid #bdbdbd; color: #8c8c8c; }

    .stage { display: grid; grid-template-rows: 30px 1fr 12px; min-height: 0; min-width: 0; }
    .views { display: flex; }
    .view { width: 192px; display: flex; align-items: center; gap: 12px; padding: 0 8px 0 7px; }
    .view.active { background: #fff; color: #222; font-weight: 700; font-size: 16px; }
    .view span { flex: 1; text-align: left; }
    .canvas { position: relative; background: #fff; min-height: 0; }
    .model { width: 100%; height: 100%; overflow: hidden; }
    .edge { stroke: #000; stroke-width: 3; stroke-linejoin: round; }
    .cube { position: absolute; left: 8px; top: 8px; width: 160px; height: 170px; }
    .face { font: 700 13px "Open Sans", sans-serif; fill: #40444a; text-anchor: middle; }
    .nav { position: absolute; left: 3px; top: 183px; width: 50px; height: 168px; border: 2px solid #939393; border-radius: 6px; background: #ededed; }
    .nav svg { width: 100%; height: 100%; }
    .browser { position: absolute; right: 0; top: 810px; bottom: 0; width: 276px; border: 2px solid #c4c4c4; border-right: 0; background: #ececec;
      box-shadow: -3px 0 12px rgba(0, 0, 0, 0.22); display: flex; flex-direction: column; padding: 0 0 8px 7px; overflow: hidden; color: #111; }
    .browser h2 { margin: 0 0 0 -4px; height: 26px; font: inherit; color: #444; white-space: nowrap; line-height: 24px; }
    .tree { flex: 1; list-style: none; margin: 0; padding: 0; background: #fff; }
    .node { display: flex; align-items: center; gap: 6px; height: 28px; white-space: nowrap; }
    .node span { padding-left: 6px; line-height: 28px; }
    .node .rooted { padding: 0 3px; margin-left: -3px; }
    .node .picked { background: #dedede; }
    .node .bold { font-weight: 700; color: #000; }
    .guide { width: 24px; height: 28px; }
    .dots { stroke: #888; stroke-dasharray: 1 2; fill: none; }

    .status { display: flex; background: #eee; overflow: hidden; height: 12px; }
    .scale { width: 80px; margin-left: 43px; color: #111; text-align: left; height: 28px; align-self: flex-start; }
    .vc { display: flex; gap: 8px; padding-top: 3px; }
    .track { flex: 1; display: flex; justify-content: center; }
    .thumbbar { width: 26px; background: #c9c9c9; }
    .track::before { content: ""; width: 1511px; }
    .track::after { content: ""; flex: 1; }
  `;

  @state() private omni = "";
  @state() private flags = [
    { label: "Immer vertikal", on: true },
    { label: "Beim Laden mit ...", on: false },
    { label: "Gemeinsam gen...", on: false },
    { label: "Raumberechnun...", on: true },
  ];

  private toggle(i: number) {
    this.flags = this.flags.map((f, n) => (n === i ? { ...f, on: !f.on } : f));
  }

  render() {
    return html`
      <svg class="defs" aria-hidden="true"><defs>
        <linearGradient id="cyan" x1="0" y1="0" x2="1" y2="1"><stop offset="0" stop-color="#c8eaf7"/><stop offset="1" stop-color="#7cc3e4"/></linearGradient>
        <linearGradient id="steel" x1="0" y1="0" x2="0" y2="1"><stop offset="0" stop-color="#d3d7df"/><stop offset="1" stop-color="#fbfbfc"/></linearGradient>
        <linearGradient id="boxFill" x1="0" y1="0" x2="0" y2="1"><stop offset="0" stop-color="#fff"/><stop offset="1" stop-color="#dcdfe8"/></linearGradient>
        <linearGradient id="cubeTop" x1="0" y1="0" x2="0" y2="1"><stop offset="0" stop-color="#ececec"/><stop offset="1" stop-color="#dedede"/></linearGradient>
        <radialGradient id="cubeShade"><stop offset="0" stop-color="#000" stop-opacity=".75"/><stop offset=".55" stop-color="#000" stop-opacity=".5"/><stop offset="1" stop-color="#000" stop-opacity="0"/></radialGradient>
      </defs></svg>
      ${this.titlebar()} ${this.tabs()} ${this.ribbon()}
      <main class="main">${this.palette()}${this.stage()}</main>
    `;
  }

  private titlebar() {
    return html`<header class="titlebar">
      <div class="quick">
        <button class="logo" aria-label="Anwendung"><svg viewBox="0 0 25 28">${mark("#1c5a9e", "#2f7fc8", "#3b9bd8")}</svg></button>
        <button class="cell menu" aria-label="Menü">${small("menu")}</button>
        ${quick.map(([id, name]) => {
          if (id === "|") return html`<div class="rule"></div>`;
          const [icon, drop] = id.split(" ");
          return html`<button class="cell" aria-label=${name}>${small(icon)}</button>
            ${drop ? html`<button class="drop" aria-label="${name} Optionen">${caret(drop === "w" ? "soft" : "dark")}</button>` : nothing}`;
        })}
        <button class="drop" aria-label="Anpassen"><svg class="i24" viewBox="0 0 24 24"><path d="M0 6h12v2H0zM0 11h12l-6 7z" fill="#444" /></svg></button>
      </div>
      <div class="title">Autodesk Revit 2020 - TU Durchgang.rfa - 3D-Ansicht: Ansicht 1</div>
      <div class="account">
        <svg class="back" width="6" height="12" viewBox="0 0 6 12"><path d="M6 0v12L0 6z" fill="#444" /></svg>
        <button aria-label="Suchen">${small("binoculars")}</button>
        <button class="login">${small("person")}Anmelden</button>
        ${caret()}
      </div>
    </header>`;
  }

  private tabs() {
    const names = ["Datei", "Erstellen", "Einfügen", "Beschriften", "Ansicht", "Verwalten", "Zusatzmodule", "Dlubal", "Ändern"];
    return html`<nav class="tabs">
      ${names.map((n, i) => html`<button class=${classMap({ tab: true, file: i === 0, active: i === 1 })}>${n}</button>`)}
      <button class="fold" aria-label="Multifunktionsleiste">
        <svg viewBox="0 0 22 14"><rect x="1" y="1" width="20" height="12" rx="3" fill="#eef0f4" stroke="#4a4f57" stroke-width="2" /><path d="M11 4l4 5H7z" fill="#333" /></svg>
        ${caret()}
      </button>
    </nav>`;
  }

  private ribbon() {
    return html`<section class="ribbon">
      <div class="group select">
        <div class="tools"><button class="tool modify">${large("cursor")}<span class="label">Ändern</span></button></div>
        <h2>Auswählen ${caret("wide")}</h2>
      </div>
      <div class="group props">
        <div class="quad">
          <button disabled aria-label="Typeneigenschaften">${large("typeProps")}</button>
          <button aria-label="Familientypen">${large("famTypes")}</button>
          <button class="on" aria-label="Eigenschaften">${large("props")}</button>
          <button aria-label="Familienkategorie">${large("famCategory")}</button>
        </div>
        <h2>Eigenschaften</h2>
      </div>
      ${groups.map((g) => html`<div class=${classMap({ group: true, context: !!g.context, plain: g.title === "Modell" })}>
        <div class="tools">
          ${g.tools.map((x) => html`<button class="tool" ?disabled=${x.off} style=${styleMap({ width: `${x.width}px` })}>
            ${large(x.icon)}
            <span class="label">${x.label.map((l) => html`<span>${l}</span>`)}${x.menu ? caret() : nothing}</span>
          </button>`)}
        </div>
        <h2>${g.title}</h2>
      </div>`)}
    </section>`;
  }

  private sectionRow(name: string) {
    return html`<tr class="section"><th colspan="2">
      <button aria-label="${name} einklappen"><svg class="chev" viewBox="0 0 8 9"><path d="M1 4l3-3 3 3M1 8l3-3 3 3" /></svg></button>${name}
    </th></tr>`;
  }

  private palette() {
    return html`<aside class="palette">
      <div class="phead"><span>Eigenschaften</span><button aria-label="Schließen"><svg class="x" viewBox="0 0 14 14"><path d="M1 1l12 12M13 1L1 13" /></svg></button></div>
      <div class="type">
        <svg class="thumb" viewBox="0 0 98 98"><path d="M4 5h88v64H4z" fill="#dfdfdf"/><path d="M4 58q40-9 88 4v31H4z" fill="#ededed"/>
          <g transform="translate(22 9) scale(2.25 2.4)">${mark("#7c7c7c", "#8e8e8e", "#a3a3a3")}</g></svg>
        ${caret("soft wide")}
      </div>
      <div class="chooser">
        <div class="combo"><select aria-label="Familie"><option>Familie: Türen</option></select>
          <svg viewBox="0 0 12 8"><path d="M1 1l5 5 5-5" fill="none" stroke="#444" stroke-width="1" /></svg></div>
        <button class="edit" disabled>
          <svg viewBox="0 0 48 48">${ribbonArt.typeProps}</svg>Typ bearbeiten</button>
      </div>
      <div class="list"><table>
        <colgroup><col class="name" /><col /></colgroup>
        <tbody>
          ${this.sectionRow("Abhängigkeiten")}
          <tr class="item dim"><th>Basisbauteil</th><td>Wand</td></tr>
          ${this.sectionRow("ID-Daten")}
          <tr class="item"><th><label for="omni">OmniClass-Num...</label></th>
            <td class="field"><input id="omni" type="text" .value=${this.omni} @input=${(e: Event) => (this.omni = (e.target as HTMLInputElement).value)} /></td></tr>
          <tr class="item dim"><th>OmniClass-Titel</th><td></td></tr>
          ${this.sectionRow("Sonstige")}
          ${this.flags.map((f, i) => html`<tr class="item"><th><label for="flag${i}">${f.label}</label></th>
            <td><span class="tick"><input class="check" id="flag${i}" type="checkbox" .checked=${f.on} @change=${() => this.toggle(i)} />
              <svg viewBox="0 0 20 20"><path d="M4 10l4 4 8-9" fill="none" stroke="#222" stroke-width="2" /></svg></span></td></tr>`)}
        </tbody>
      </table></div>
      <div class="pfoot"><a href="#hilfe">Hilfe zu Eigenschaften</a><button disabled>Anwenden</button></div>
    </aside>`;
  }

  private stage() {
    return html`<section class="stage">
      <div class="views">
        <button class="view">${small("planView")}<span>EG</span></button>
        <button class="view">${small("schedule")}<span>MOMA_P3_GR</span></button>
        <button class="view active">${small("house")}<span>Ansicht 1</span><svg class="x" viewBox="0 0 14 14"><path d="M1 1l12 12M13 1L1 13" /></svg></button>
      </div>
      <div class="canvas">${this.model()}${this.viewCube()}${this.navBar()}${this.browser()}</div>
      <footer class="status">
        <button class="scale">1 : 20</button>
        <div class="vc">${["detail", "visual", "sun", "shadow", "crop", "lock", "reveal", "region", "chevronLeft"].map(small)}</div>
        <div class="track"><div class="thumbbar"></div></div>
      </footer>
    </section>`;
  }

  private model() {
    return html`<svg class="model" viewBox="332 252 3212 1743" preserveAspectRatio="xMinYMin meet" role="img" aria-label="Wand mit Durchgang">
      <path d="M1968 1573L2183 1697" stroke="#000" stroke-width="2" />
      <g class="edge">
        <path d="M1857 655L1968 719V1573L1857 1636z" fill="#5c5c5c" />
        <path d="M1695 398L1805 334 2452 707 2341 771z" fill="#979797" />
        <path d="M2341 771L2452 707V1852L2341 1915z" fill="#5c5c5c" />
        <path d="M1695 398L2341 771V1915L2182 1824V843L1857 655V1636L1695 1543z" fill="#979797" />
      </g>
      <path d="M1975 1672l8-9M1995 1658q9-3 18-3M2027 1655q9 0 18-4M2055 1646l10-9M2071 1628l9-12M2086 1608l9-9M2107 1592q8-2 17-2M2139 1589q9 0 18-2M2168 1581l10-11M2183 1564l4-6"
        fill="none" stroke="#008000" stroke-width="7" stroke-linecap="round" />
      <path d="M1971 1669l-14 15 12 6zM2196 1541l-14 14 12 6z" fill="#008000" stroke="#008000" stroke-width="5" stroke-linejoin="round" />
      <path d="M1957 1685l12 6M1967 1676l4-6v5M2182 1556l11 6M2192 1548l4-6v5" stroke="#000" fill="none" />
    </svg>`;
  }

  private viewCube() {
    return html`<svg class="cube" viewBox="340 260 160 170" role="img" aria-label="ViewCube">
      <ellipse cx="426" cy="386" rx="64" ry="40" fill="url(#cubeShade)" />
      <g stroke="#555" stroke-width="1" stroke-linejoin="round">
        <path d="M372 315L425 345V407L377 372z" fill="#dcdcdc" />
        <path d="M425 345L479 315 473 372 425 407z" fill="#d6d6d6" />
        <path d="M425 290L479 315 425 345 372 315z" fill="url(#cubeTop)" />
      </g>
      <path d="M425 333l11 6v12l-11 6-11-6v-12z" fill="#8aa0ba" opacity=".5" />
      <path d="M425 345v62" stroke="#555" />
      <text class="face" transform="translate(425 310) rotate(205) skewX(-32)">OBEN</text>
      <text class="face" transform="translate(400 366) skewY(33)">HINTEN</text>
      <text class="face" transform="translate(451 366) skewY(-33)">LINKS</text>
      <path d="M462 277l11-10 12 10h-2v11h-18v-11z" fill="#f2f2f2" stroke="#777" /><path d="M471 279h5v9h-5z" fill="#666" />
      <path d="M349 387h17v3h-17zM349 392h17l-8 9z" fill="#f2f2f2" stroke="#777" />
    </svg>`;
  }

  private navBar() {
    return html`<div class="nav" role="toolbar" aria-label="Navigation"><svg viewBox="337 437 46 164">
      <circle cx="374" cy="444" r="6" fill="#8a8a8a" /><path d="M372 442l4 4m0-4l-4 4" stroke="#fff" stroke-width="2" />
      <path d="M370 463h-16q-11 2-11 14 0 11 12 13M370 463v17" fill="none" stroke="#555b64" stroke-width="2" />
      <circle cx="356" cy="476" r="10" fill="#dfe3e8" /><circle cx="356" cy="476" r="6" fill="#f4f4f4" stroke="#555b64" stroke-width="2" />
      <path d="M352 482l-7 6M362 485q-4 4-8 5" stroke="#555b64" stroke-width="2" fill="none" />
      <path d="M363 484l4-4h11v11l-4 4h-11z" fill="#5da6e4" stroke="#1b64ab" /><path d="M363 484l4-4h11l-4 4z" fill="#b4dcf8" stroke="#1b64ab" /><path d="M374 484v11" stroke="#1b64ab" />
      <path d="M356 507h8l-4 5z" fill="#333" /><path d="M340 518h40" stroke="#999" />
      <path d="M348 531l4 0m-4 0v4m0-4l14 14m0 0v-4m0 4h-4M362 531h-4m4 0v4m0-4l-14 14m0 0v-4m0 4h4" fill="none" stroke="#444" stroke-width="1" />
      <rect x="360" y="543" width="8" height="8" fill="#eef3f2" stroke="#555b64" stroke-width="2" /><path d="M368 551l4 4" stroke="#555b64" stroke-width="3" />
      <path d="M356 570h8l-4 5z" fill="#333" /><circle cx="374" cy="592" r="6" fill="#8a8a8a" /><path d="M371 592h6" stroke="#fff" stroke-width="2" />
    </svg></div>`;
  }

  private browser() {
    return html`<section class="browser">
      <h2>Projektbrowser - TU Durchgang.rfa</h2>
      <ul class="tree" role="tree">
        ${tree.map((n) => html`<li class="node" role="treeitem">
          ${n.guides.map(guide)}${n.icon ? small(n.icon) : nothing}
          <span class=${classMap({ rooted: !!n.icon, picked: !!n.picked, bold: !!n.bold })}>${n.text}</span>
        </li>`)}
      </ul>
    </section>`;
  }
}
